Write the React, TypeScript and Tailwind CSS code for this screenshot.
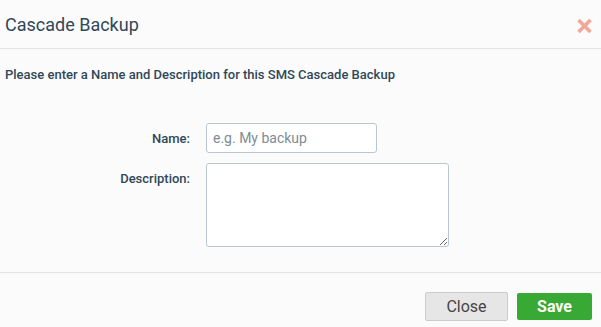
import React from "react";

export default function App() {
  return (
    <div className="w-[601px] h-[327px] bg-[#fbfbfb] flex flex-col text-[#2f4858]" style={{ fontFamily: "Roboto, 'Liberation Sans', sans-serif" }}>
      <div className="h-[49px] border-b border-[#e3e3e3] flex items-center justify-between pl-[5px] pr-[8px] shrink-0">
        <h1 className="text-[18px] leading-none font-normal text-[#2f4858] pt-[2px]">Cascade Backup</h1>
        <button className="w-[17px] h-[17px] mt-[3px] flex items-center justify-center">
          <svg width="17" height="16" viewBox="0 0 17 16">
            <path d="M2.5 2 L14.5 14 M14.5 2 L2.5 14" stroke="#f2a898" strokeWidth="3.6" strokeLinecap="butt" />
          </svg>
        </button>
      </div>
      <div className="flex-1 flex flex-col">
        <p className="pl-[5px] pt-[18px] text-[13px] font-medium leading-[16px]">Please enter a Name and Description for this SMS Cascade Backup</p>
        <div className="grid grid-cols-[190px_auto] gap-x-[16px] gap-y-[10px] mt-[40px] items-start">
          <label className="text-right text-[13px] font-medium pt-[6px]">Name:</label>
          <input
            className="w-[171px] h-[30px] bg-white border border-[#b9c6d1] rounded-[3px] px-[6px] text-[14px] outline-none placeholder:text-[#7d8c96]"
            placeholder="e.g. My backup"
          />
          <label className="text-right text-[13px] font-medium pt-[6px]">Description:</label>
          <textarea className="w-[243px] h-[84px] bg-white border border-[#b9c6d1] rounded-[3px] outline-none" />
        </div>
      </div>
      <div className="h-[55px] border-t border-[#e3e3e3] flex items-start justify-end gap-[9px] pr-[9px] pt-[19px] shrink-0">
        <button className="w-[83px] h-[29px] bg-[#e6e6e6] border border-[#cccccc] rounded-[2px] text-[16px] text-[#444]">Close</button>
        <button className="w-[75px] h-[27px] mt-[1px] bg-[#39a935] rounded-[2px] text-[16px] font-bold text-white">Save</button>
      </div>
    </div>
  );
}
